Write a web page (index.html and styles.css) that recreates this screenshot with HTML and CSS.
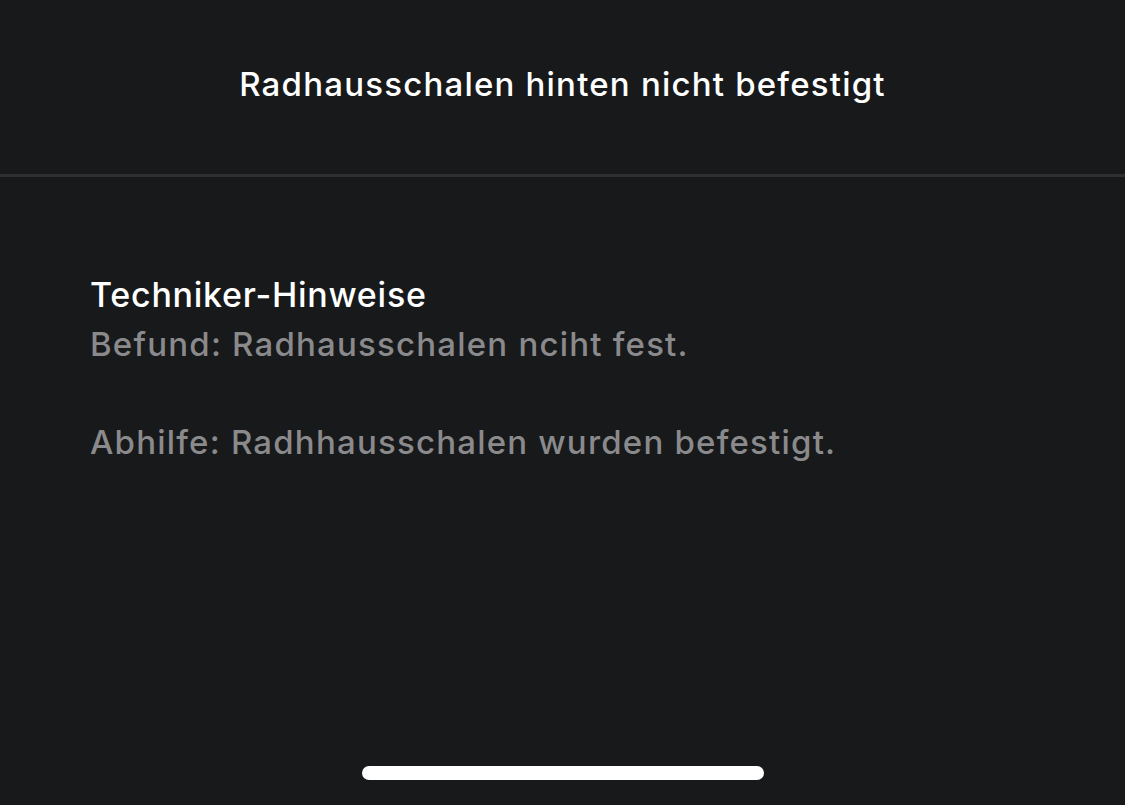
FILE: index.html
```html
<!DOCTYPE html>
<html lang="de">
<head>
<meta charset="utf-8">
<link rel="stylesheet" href="styles.css">
</head>
<body>
<div class="screen">
  <header class="header">
    <h1 class="title">Radhausschalen hinten nicht befestigt</h1>
  </header>
  <main class="content">
    <h2 class="heading">Techniker-Hinweise</h2>
    <p class="note">Befund: Radhausschalen nciht fest.</p>
    <p class="note spaced">Abhilfe: Radhhausschalen wurden befestigt.</p>
  </main>
  <div class="home-area"><div class="home-indicator"></div></div>
</div>
</body>
</html>
```
FILE: styles.css
```css
html, body {
  margin: 0;
  padding: 0;
  background: #18191b;
}
.screen {
  width: 1125px;
  height: 805px;
  display: flex;
  flex-direction: column;
  background: #18191b;
  font-family: Inter, "Noto Sans", sans-serif;
  overflow: hidden;
}
.header {
  height: 174px;
  border-bottom: 3px solid #2e2f31;
  display: flex;
  justify-content: center;
  box-sizing: content-box;
}
.title {
  margin: 62px 0 0;
  font-size: 33px;
  line-height: 44px;
  font-weight: 500;
  color: #ffffff;
  letter-spacing: 1.2px;
}
.content {
  flex: 1;
  padding: 93px 90px 0;
}
.heading {
  margin: 0;
  font-size: 34px;
  line-height: 50px;
  font-weight: 500;
  color: #ffffff;
  letter-spacing: 0.75px;
}
.note {
  margin: 0;
  font-size: 33px;
  line-height: 49px;
  font-weight: 500;
  color: #8a8a8c;
  letter-spacing: 1.2px;
}
.note.spaced {
  margin-top: 49px;
}
.home-area {
  height: 39px;
  display: flex;
  justify-content: center;
}
.home-indicator {
  width: 402px;
  height: 14px;
  border-radius: 7px;
  background: #ffffff;
}
```
